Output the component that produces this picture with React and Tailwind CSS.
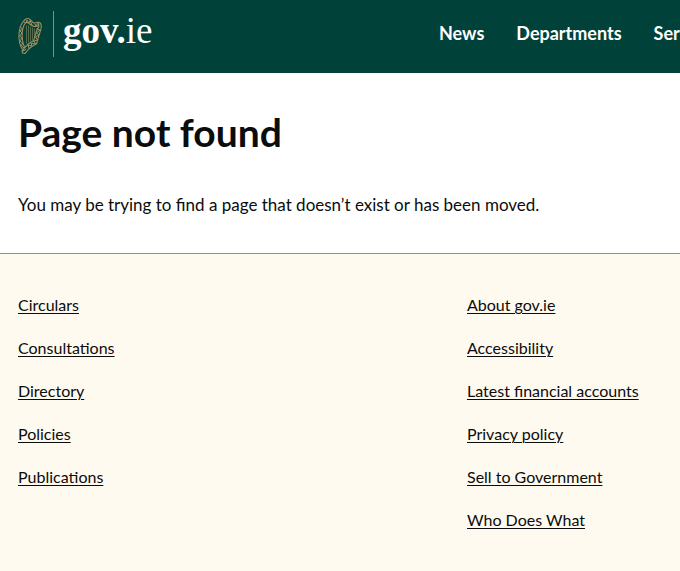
import React from "react";

const navItems = ["News", "Departments", "Services"];

const footerColumns = [
  {
    label: "Publications and policy",
    links: ["Circulars", "Consultations", "Directory", "Policies", "Publications"],
  },
  {
    label: "About this site",
    links: [
      "About gov.ie",
      "Accessibility",
      "Latest financial accounts",
      "Privacy policy",
      "Sell to Government",
      "Who Does What",
    ],
  },
];

function Harp() {
  return (
    <svg
      className="h-[38px] w-6 shrink-0"
      viewBox="0 0 24 38"
      fill="none"
      stroke="#a39161"
      strokeLinecap="round"
      strokeLinejoin="round"
      aria-hidden="true"
    >
      <path d="M5 33C2 29 .8 24 1 18C1.200 11 3.500 5 8 2C10.500 .5 12.500 2.500 14.500 5C16.500 7.500 18.500 4.500 21.500 5.500C24 7 23.500 11 22 15L18.500 27C15 28.500 12 30.500 9 34L7 36.500L4.500 36L4 34Z" strokeWidth="1.100" strokeDasharray="2.500 .8" />
      <path d="M6.500 30C4 24 3.500 18 4.800 12C5.800 8 7 5.500 9 5.500C12 6.500 14 9.500 17 9.500C19 9.500 20 8.500 21 8M19.500 11L15.500 24C12 25 9 28 6.500 31" strokeWidth="1.100" strokeDasharray="3 .7" />
      <path d="M2.500 10L4.500 12L2 14L4 16L1.500 19L4 21L2 24L4.500 26L3.500 29L6 31L5.500 34L8 32M6 5L8 6L9 3L11 6L12 3.500L14 8M17 7L18 9L20 6L21 10L19.500 12L22 13L18.500 16L21 18L17.500 20L19.500 23L16 24L17.500 27L13 26L14 29L10 28L11 31" strokeWidth="1" />
      <path d="M8.500 9V26M10.500 9V25M12.500 10V24M14.500 11V23M16.500 12V19" strokeWidth=".7" opacity=".75" />
    </svg>
  );
}

function Header() {
  return (
    <header className="flex h-[73px] justify-between overflow-hidden bg-[#004239] pl-[18px] text-white">
      <a href="#home" aria-label="gov.ie home" className="flex items-start gap-[9px] pt-[11px]">
        <span className="pt-[6px]">
          <Harp />
        </span>
        <span className="ml-[2px] h-[46px] w-px bg-[#6f9690]" />
        <span className="font-['Liberation_Serif',serif] text-[37px] leading-[40px]">
          <span className="font-bold">gov.</span>ie
        </span>
      </a>
      <nav
        aria-label="Main"
        className="flex w-[241px] shrink-0 gap-8 whitespace-nowrap pt-[19px] text-lg font-bold leading-[28px]"
      >
        {navItems.map((item) => (
          <a key={item} href={"#" + item.toLowerCase()}>
            {item}
          </a>
        ))}
      </nav>
    </header>
  );
}

function Footer() {
  return (
    <footer className="grid grow grid-cols-[1fr_195px] border-t border-[#a38d65] bg-[#fffaef] px-[18px] pb-10 pt-[39px]">
      {footerColumns.map(({ label, links }) => (
        <nav key={label} aria-label={label}>
          <ul className="flex flex-col gap-[19px]">
            {links.map((link) => (
              <li key={link} className="leading-6">
                <a href="#" className="underline decoration-1 underline-offset-2">
                  {link}
                </a>
              </li>
            ))}
          </ul>
        </nav>
      ))}
    </footer>
  );
}

export default function App() {
  return (
    <div className="flex min-h-screen flex-col bg-white font-[Lato,sans-serif] text-base text-[#0b0c0c]">
      <Header />
      <main className="px-[18px] py-[35px]">
        <h1 className="text-[39px] font-bold leading-[48px]">Page not found</h1>
        <p className="pt-9 text-[17px] leading-[26px]">
          You may be trying to find a page that doesn’t exist or has been moved.
        </p>
      </main>
      <Footer />
    </div>
  );
}
